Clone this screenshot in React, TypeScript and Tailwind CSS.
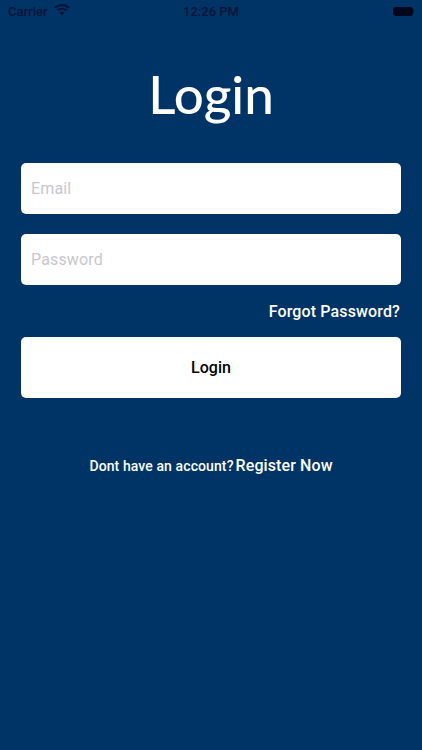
import React from 'react'

const StatusBar = () => (
  <div className="flex h-[22px] items-center justify-between px-[8px] text-[#081638]">
    <div className="flex w-[140px] items-center gap-[6px]">
      <span className="text-[13px] font-medium leading-none">Carrier</span>
      <svg width="16" height="12" viewBox="0 0 16 12" fill="currentColor" className="mt-[-2px]">
        <path d="M8 0C5 0 2.300 1.200.3 3.100l1.500 1.600A9 9 0 0 1 8 2.200a9 9 0 0 1 6.200 2.500l1.500-1.600A11.200 11.200 0 0 0 8 0z" />
        <path d="M8 3.700c-2 0-3.800.8-5.100 2l1.500 1.600A5.300 5.300 0 0 1 8 5.900c1.400 0 2.700.5 3.600 1.400l1.500-1.600A7.400 7.400 0 0 0 8 3.700z" />
        <path d="M8 7.500c-1 0-1.900.4-2.600 1L8 11.500l2.600-3c-.7-.6-1.600-1-2.600-1z" />
      </svg>
    </div>
    <span className="text-[13px] font-medium leading-none">12:26 PM</span>
    <div className="flex w-[140px] justify-end">
      <div className="flex items-center">
        <div className="h-[9px] w-[20px] rounded-[3px] bg-[#02081c]" />
        <div className="h-[4px] w-[1px] rounded-r-sm bg-[#0d1b3a]" />
      </div>
    </div>
  </div>
)

const Field = ({ placeholder }: { placeholder: string }) => (
  <div className="flex h-[51px] items-center rounded-[5px] bg-white px-[10px]">
    <span className="text-[16px] tracking-[0.15px] text-[#c7c7cd]">{placeholder}</span>
  </div>
)

export default function App() {
  return (
    <div className="h-[750px] w-[422px] overflow-hidden bg-[#003366] font-['Roboto',sans-serif] text-white">
      <StatusBar />
      <h1 className="mt-[30px] text-center font-['Lato',sans-serif] text-[53px] font-medium leading-[83px]">Login</h1>
      <div className="mt-[28px] flex flex-col gap-[20px] px-[21px]">
        <Field placeholder="Email" />
        <Field placeholder="Password" />
      </div>
      <div className="mt-[16px] pr-[22px] text-right text-[16px] font-medium leading-[22px] tracking-[0.13px]">Forgot Password?</div>
      <div className="mx-[21px] mt-[14px] flex h-[61px] items-center justify-center rounded-[5px] bg-white pt-[1px] text-[16px] font-medium text-black">
        Login
      </div>
      <div className="mt-[56px] flex items-center justify-center gap-[2px]">
        <span className="text-[14px] font-medium tracking-[0.1px]">Dont have an account?</span>
        <span className="text-[16px] font-medium tracking-[0.1px]">Register Now</span>
      </div>
    </div>
  )
}
